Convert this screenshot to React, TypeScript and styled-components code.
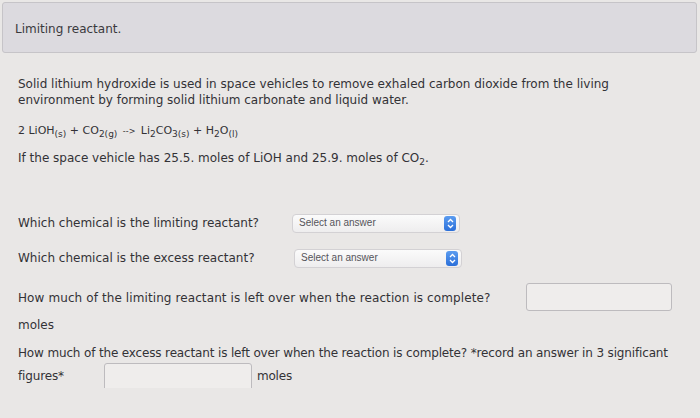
import React from "react";
import styled, { createGlobalStyle } from "styled-components";

const GlobalStyle = createGlobalStyle`
  html, body {
    margin: 0;
    padding: 0;
    background: #e9e7e6;
  }
  body {
    font-family: "DejaVu Sans", "Open Sans", sans-serif;
    color: #333236;
  }
`;

type SelectProps = {
  shift?: number;
};

function Stepper() {
  return (
    <SStepper>
      <svg width="7" height="11" viewBox="0 0 7 11">
        <path d="M1 4 L3.5 1.5 L6 4" fill="none" stroke="#fff" strokeWidth="1.3" />
        <path d="M1 7 L3.5 9.5 L6 7" fill="none" stroke="#fff" strokeWidth="1.3" />
      </svg>
    </SStepper>
  );
}

function AnswerSelect(props: SelectProps) {
  return (
    <SSelect shift={props.shift || 0}>
      <span>Select an answer</span>
      <Stepper />
    </SSelect>
  );
}

export default function App() {
  return (
    <SPage>
      <GlobalStyle />
      <SHeader>Limiting reactant.</SHeader>
      <SBody>
        <SPara>
          Solid lithium hydroxide is used in space vehicles to remove exhaled carbon dioxide from the living
          environment by forming solid lithium carbonate and liquid water.
        </SPara>
        <SEquation>
          2 LiOH<sub>(s)</sub> + CO<sub>2(g)</sub> <SArrow>--&gt;</SArrow> Li<sub>2</sub>CO<sub>3(s)</sub> + H
          <sub>2</sub>O<sub>(l)</sub>
        </SEquation>
        <SStatement>
          If the space vehicle has 25.5. moles of LiOH and 25.9. moles of CO<sub>2</sub>.
        </SStatement>

        <SSelectRow top={45}>
          <SLabel>Which chemical is the limiting reactant?</SLabel>
          <AnswerSelect />
        </SSelectRow>
        <SSelectRow top={15}>
          <SLabel>Which chemical is the excess reactant?</SLabel>
          <AnswerSelect shift={2} />
        </SSelectRow>

        <SInputRow>
          <SWide>How much of the limiting reactant is left over when the reaction is complete?</SWide>
          <SInput width={146} />
        </SInputRow>
        <SUnit>moles</SUnit>

        <SLast>
          <span>
            How much of the excess reactant is left over when the reaction is complete? *record an answer in 3
            significant
          </span>{" "}
          <span>figures*</span>
          <SInlineInput width={148} />
          <span>moles</span>
        </SLast>
      </SBody>
    </SPage>
  );
}

const SPage = styled.div`
  padding: 2px 3px 0 2px;
`;

const SHeader = styled.div`
  height: 51px;
  box-sizing: border-box;
  border: 1px solid #c6c4c8;
  border-radius: 3px;
  background: #dcdadf;
  padding: 3px 0 0 12px;
  display: flex;
  align-items: center;
  font-size: 12px;
  color: #3a393d;
`;

const SBody = styled.div`
  padding: 0 22px 0 16px;
  font-size: 12px;
  line-height: 16px;

  sub {
    font-size: 9px;
    line-height: 0;
    vertical-align: -3px;
  }
`;

const SPara = styled.p`
  margin: 23px 0 0 0;
`;

const SEquation = styled.div`
  margin-top: 13px;
  font-size: 11px;
  line-height: 20px;
`;

const SArrow = styled.span`
  font-size: 8px;
  margin: 0 2px;
`;

const SStatement = styled.div`
  margin-top: 6px;
  line-height: 20px;
`;

const SSelectRow = styled.div<{ top: number }>`
  margin-top: ${(p) => p.top}px;
  display: flex;
  align-items: center;
  height: 20px;
`;

const SLabel = styled.span`
  width: 274px;
`;

const SSelect = styled.div<{ shift: number }>`
  margin-left: ${(p) => p.shift}px;
  width: 168px;
  height: 19px;
  box-sizing: border-box;
  border: 1px solid #d3d1d4;
  border-radius: 4px;
  background: linear-gradient(#fbfbfb, #eeedee);
  display: flex;
  align-items: center;
  justify-content: space-between;
  padding: 0 3px 0 6px;
  font-family: "Liberation Sans", Arial, sans-serif;
  font-size: 10px;
  color: #55545a;
`;

const SStepper = styled.div`
  width: 12px;
  height: 15px;
  border-radius: 3px;
  background: linear-gradient(#5b9cf0, #2b6fd9);
  display: flex;
  align-items: center;
  justify-content: center;
`;

const SInputRow = styled.div`
  margin-top: 16px;
  display: flex;
  align-items: center;
  justify-content: space-between;
  height: 28px;
`;

const SWide = styled.span`
  letter-spacing: 0.1px;
`;

const SInput = styled.div<{ width: number }>`
  width: ${(p) => p.width}px;
  height: 28px;
  margin: -3px 3px 0 0;
  box-sizing: border-box;
  border: 1px solid #bdbbbe;
  border-radius: 3px;
  background: #efedec;
`;

const SUnit = styled.div`
  margin-top: 4px;
  line-height: 18px;
`;

const SLast = styled.div`
  margin-top: 8px;
  line-height: 23px;
  letter-spacing: -0.15px;
`;

const SInlineInput = styled.span<{ width: number }>`
  display: inline-block;
  vertical-align: middle;
  width: ${(p) => p.width}px;
  height: 28px;
  box-sizing: border-box;
  border: 1px solid #bdbbbe;
  border-radius: 3px;
  background: #efedec;
  margin: -3px 5px -3px 40px;
`;
